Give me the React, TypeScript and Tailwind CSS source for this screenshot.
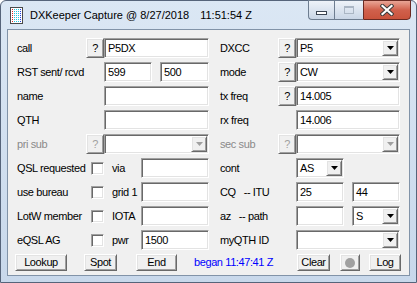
import React from "react";

const sunken =
  "border border-t-[#a0a0a0] border-l-[#a0a0a0] border-b-white border-r-white shadow-[inset_1px_1px_0_#696969,inset_-1px_-1px_0_#e3e3e3]";
const raised =
  "border border-t-white border-l-white border-b-[#696969] border-r-[#696969] shadow-[inset_1px_1px_0_#e3e3e3,inset_-1px_-1px_0_#a0a0a0] bg-[#f0f0f0]";

const Arrow = ({ disabled = false }: { disabled?: boolean }) => (
  <svg width="7" height="4" viewBox="0 0 7 4">
    <polygon points="0,0 7,0 3.5,4" fill={disabled ? "#a0a0a0" : "#000"} />
  </svg>
);

const Field = ({ w, value = "" }: { w: string; value?: string }) => (
  <div className={`${sunken} ${w} h-[20px] bg-white flex items-center pl-[3px] overflow-hidden`}>
    {value}
  </div>
);

const Combo = ({ w, value = "", disabled = false }: { w: string; value?: string; disabled?: boolean }) => (
  <div className={`${sunken} ${w} h-[20px] bg-white flex p-[1px]`}>
    <div className="flex-1 flex items-center pl-[2px]">{value}</div>
    <div className={`${raised} w-[16px] flex items-center justify-center`}>
      <Arrow disabled={disabled} />
    </div>
  </div>
);

const Q = ({ disabled = false }: { disabled?: boolean }) => (
  <div
    className={`${raised} w-[18px] h-[20px] flex items-center justify-center ${
      disabled ? "text-[#a0a0a0]" : "text-black"
    }`}
  >
    ?
  </div>
);

const Check = () => <div className={`${sunken} w-[13px] h-[13px] bg-white`} />;

const Row = ({ children }: { children: React.ReactNode }) => (
  <div className="h-[20px] flex items-center">{children}</div>
);

const Btn = ({ w, children }: { w: string; children: React.ReactNode }) => (
  <div className={`${raised} ${w} h-[17px] flex items-center justify-center`}>{children}</div>
);

const TitleIcon = () => (
  <svg width="13" height="17" viewBox="0 0 13 17">
    <rect x="0.5" y="0.5" width="12" height="16" fill="#fff" stroke="#4a4a4a" />
    {[2, 4, 6, 8, 10, 12, 14].map((y) => (
      <g key={y}>
        <rect x="2" y={y} width="1" height="1" fill="#e02020" />
        {[4, 6, 8, 10].map((x) => (
          <rect key={x} x={x} y={y} width="1" height="1" fill={x === 10 ? "#2040e0" : "#20c8e0"} />
        ))}
      </g>
    ))}
  </svg>
);

const CaptionButtons = () => (
  <div className="flex -mt-[1px]">
    <div className="w-[26px] h-[20px] border border-[#6d7d90] border-r-0 rounded-bl-[4px] bg-linear-to-b from-[#eef3f9] to-[#c9d6e6] flex items-end justify-center pb-[4px]">
      <div className="w-[11px] h-[4px] bg-white border border-[#3a4452]" />
    </div>
    <div className="w-[29px] h-[20px] border border-[#6d7d90] border-r-0 bg-linear-to-b from-[#eef3f9] to-[#c9d6e6] flex items-center justify-center">
      <div className="w-[10px] h-[8px] border border-[#aab6c4] border-t-2" />
    </div>
    <div className="w-[48px] h-[20px] border border-[#6a2a22] rounded-br-[4px] bg-linear-to-b from-[#e8a596] via-[#d0604c] to-[#c9533c] flex items-center justify-center">
      <svg width="14" height="12" viewBox="0 0 14 12">
        <path d="M2.5 2 L11.5 10 M11.5 2 L2.5 10" stroke="#3b3b3b" strokeWidth="4.2" strokeLinecap="square" />
        <path d="M2.5 2 L11.5 10 M11.5 2 L2.5 10" stroke="#fff" strokeWidth="2.2" strokeLinecap="square" />
      </svg>
    </div>
  </div>
);

export default function App() {
  return (
    <div className="w-[417px] h-[283px] flex flex-col rounded-t-[6px] border border-[#56647a] bg-linear-to-b from-[#dbe7f4] to-[#c8d8eb] text-black">
      {/* Title bar */}
      <div className="h-[28px] flex items-start pl-[9px] pr-[5px]">
        <div className="h-[28px] flex items-center font-['Liberation_Sans',Arial,sans-serif] text-[11px]">
          <TitleIcon />
          <span className="ml-[7px]">DXKeeper Capture @ 8/27/2018</span>
          <span className="ml-[11px]">11:51:54 Z</span>
        </div>
        <div className="ml-auto">
          <CaptionButtons />
        </div>
      </div>

      {/* Client area */}
      <div className="flex-1 px-[6px] pb-[6px]">
        <div className="h-full border border-[#8193a8] bg-[#f0f0f0] pt-[8px] pl-[9px] font-['Liberation_Sans',Arial,sans-serif] text-[11px] tracking-[-0.4px]">
          <div className="grid grid-cols-[192px_180px] gap-x-[11px]">
            {/* Left column */}
            <div className="flex flex-col gap-[4px]">
              <Row>
                <span className="w-[69px]">call</span>
                <Q />
                <Field w="w-[105px]" value="P5DX" />
              </Row>
              <Row>
                <span className="w-[87px] whitespace-pre">RST sent/ rcvd</span>
                <Field w="w-[48px]" value="599" />
                <div className="w-[8px]" />
                <Field w="w-[49px]" value="500" />
              </Row>
              <Row>
                <span className="w-[87px]">name</span>
                <Field w="w-[105px]" />
              </Row>
              <Row>
                <span className="w-[87px]">QTH</span>
                <Field w="w-[105px]" />
              </Row>
              <Row>
                <span className="w-[69px] text-[#8a8a8a]">pri sub</span>
                <Q disabled />
                <Combo w="w-[105px]" disabled />
              </Row>
              <Row>
                <span className="w-[74px]">QSL requested</span>
                <Check />
                <span className="ml-[8px] w-[29px]">via</span>
                <Field w="w-[68px]" />
              </Row>
              <Row>
                <span className="w-[74px]">use bureau</span>
                <Check />
                <span className="ml-[8px] w-[29px]">grid 1</span>
                <Field w="w-[68px]" />
              </Row>
              <Row>
                <span className="w-[74px]">LotW member</span>
                <Check />
                <span className="ml-[8px] w-[29px]">IOTA</span>
                <Field w="w-[68px]" />
              </Row>
              <Row>
                <span className="w-[74px]">eQSL AG</span>
                <Check />
                <span className="ml-[8px] w-[29px]">pwr</span>
                <Field w="w-[68px]" value="1500" />
              </Row>
            </div>

            {/* Right column */}
            <div className="flex flex-col gap-[4px]">
              <Row>
                <span className="w-[58px]">DXCC</span>
                <Q />
                <Combo w="w-[104px]" value="P5" />
              </Row>
              <Row>
                <span className="w-[58px]">mode</span>
                <Q />
                <Combo w="w-[104px]" value="CW" />
              </Row>
              <Row>
                <span className="w-[58px]">tx freq</span>
                <Q />
                <Field w="w-[104px]" value="14.005" />
              </Row>
              <Row>
                <span className="w-[76px]">rx freq</span>
                <Field w="w-[104px]" value="14.006" />
              </Row>
              <Row>
                <span className="w-[58px] text-[#8a8a8a]">sec sub</span>
                <Q disabled />
                <Combo w="w-[104px]" disabled />
              </Row>
              <Row>
                <span className="w-[76px]">cont</span>
                <Combo w="w-[48px]" value="AS" />
              </Row>
              <Row>
                <span className="w-[76px] whitespace-pre">CQ   -- ITU</span>
                <Field w="w-[48px]" value="25" />
                <div className="w-[8px]" />
                <Field w="w-[48px]" value="44" />
              </Row>
              <Row>
                <span className="w-[76px] whitespace-pre">az   -- path</span>
                <Field w="w-[48px]" />
                <div className="w-[8px]" />
                <Combo w="w-[48px]" value="S" />
              </Row>
              <Row>
                <span className="w-[76px]">myQTH ID</span>
                <Combo w="w-[104px]" />
              </Row>
            </div>
          </div>

          {/* Button row */}
          <div className="mt-[4px] flex items-center -ml-[2px]">
            <Btn w="w-[52px]">Lookup</Btn>
            <div className="w-[17px]" />
            <Btn w="w-[33px]">Spot</Btn>
            <div className="w-[19px]" />
            <Btn w="w-[41px]">End</Btn>
            <span className="ml-[17px] text-[#0000ff]">began 11:47:41 Z</span>
            <div className="ml-auto mr-[8px] flex items-center">
              <Btn w="w-[33px]">Clear</Btn>
              <div className="w-[10px]" />
              <Btn w="w-[20px]">
                <div className="w-[10px] h-[10px] rounded-full bg-[#a0a0a0]" />
              </Btn>
              <div className="w-[9px]" />
              <Btn w="w-[32px]">Log</Btn>
            </div>
          </div>
        </div>
      </div>
    </div>
  );
}
